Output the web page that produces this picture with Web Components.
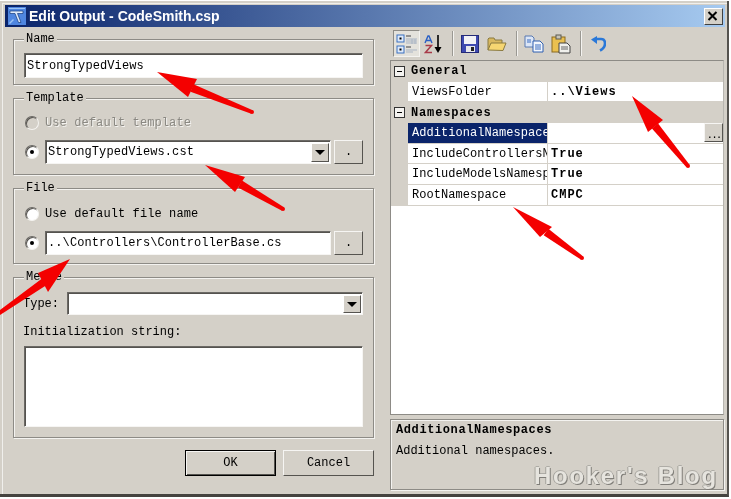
<!DOCTYPE html>
<html>
<head>
<meta charset="utf-8">
<title>Edit Output - CodeSmith.csp</title>
<style>
  html, body { margin: 0; padding: 0; background: #fff; }
  body { font: 12px "Liberation Mono", monospace; color: #000; }
</style>
</head>
<body>
<edit-output-dialog caption="Edit Output - CodeSmith.csp">
  <win-group slot="left" label="Name" style="height:46px">
    <win-edit value="StrongTypedViews" style="margin:13px 0 0 10px;width:339px;height:25px"></win-edit>
  </win-group>
  <win-group slot="left" label="Template" style="height:77px">
    <win-radio label="Use default template" disabled style="margin:17px 0 0 11px"></win-radio>
    <div style="display:flex;margin:10px 0 0 11px;gap:3px;align-items:center">
      <win-radio checked></win-radio>
      <win-edit value="StrongTypedViews.cst" dropdown style="margin-left:3px;width:286px;height:24px"></win-edit>
      <win-button label="." style="width:29px;height:24px"></win-button>
    </div>
  </win-group>
  <win-group slot="left" label="File" style="height:76px">
    <win-radio label="Use default file name" style="margin:18px 0 0 11px"></win-radio>
    <div style="display:flex;margin:10px 0 0 11px;gap:3px;align-items:center">
      <win-radio checked></win-radio>
      <win-edit value="..\Controllers\ControllerBase.cs" style="margin-left:3px;width:286px;height:24px"></win-edit>
      <win-button label="." style="width:29px;height:24px"></win-button>
    </div>
  </win-group>
  <win-group slot="left" label="Merge" style="height:161px">
    <div style="display:flex;align-items:center;margin:14px 0 0 9px">
      <span style="width:44px;white-space:pre">Type:</span>
      <win-edit dropdown style="width:296px;height:23px"></win-edit>
    </div>
    <div style="margin:10px 0 0 9px;height:14px;line-height:14px">Initialization string:</div>
    <win-edit style="margin:7px 0 0 10px;width:339px;height:81px"></win-edit>
  </win-group>
  <div slot="footer" style="display:flex;justify-content:flex-end;gap:7px;margin-top:-1px">
    <win-button label="OK" default style="width:91px;height:26px"></win-button>
    <win-button label="Cancel" style="width:91px;height:26px"></win-button>
  </div>
  <prop-toolbar slot="right"></prop-toolbar>
  <prop-grid slot="right"></prop-grid>
  <prop-help slot="right" heading="AdditionalNamespaces" text="Additional namespaces."></prop-help>
</edit-output-dialog>
<red-arrows></red-arrows>

<script>
// Dialog shell: frame, caption bar and the two columns
class EditOutputDialog extends HTMLElement {
  constructor() {
    super();
    this.attachShadow({ mode: "open" });
  }
  connectedCallback() {
    this.shadowRoot.innerHTML = `
      <style>
        :host {
          display: block; width: 729px; height: 496px; box-sizing: border-box;
          background: #d4d0c8; padding: 4px 2px 0 5px; margin-top: 1px;
          border-bottom: 3px solid #45433f; border-right: 2px solid #55534f; position: relative;
          box-shadow: inset 2px 2px 0 #d4d0c8, inset 3px 3px 0 #f0efec;
          filter: blur(.3px);
        }
        .caption {
          height: 22px; display: flex; align-items: center;
          background: linear-gradient(90deg, #0a246a, #a6caf0);
          color: #fff; font: bold 14px "Liberation Sans", sans-serif;
          padding-left: 3px;
        }
        .caption svg { margin-right: 3px; }
        .close {
          margin-left: auto; margin-right: 2px; width: 19px; height: 17px; box-sizing: border-box;
          background: #d4d0c8; display: flex; align-items: center; justify-content: center;
          border: 1px solid; border-color: #fff #404040 #404040 #fff;
        }
        .body { display: grid; grid-template-columns: 361px 334px; column-gap: 16px; padding-left: 8px; }
        .left { display: flex; flex-direction: column; gap: 13px; padding-top: 12px; }
        .right { display: flex; flex-direction: column; padding-top: 3px; }
        .wm {
          position: absolute; left: 534px; top: 461px; white-space: nowrap;
          font: bold 24px "Liberation Sans", sans-serif; letter-spacing: 1.7px;
          color: #e6e4de; text-shadow: 1px 1px 0 #7f7d78, -1px 0 0 #a5a39d, 0 -1px 0 #aeaca6;
        }
      </style>
      <div class="caption">
        <svg width="18" height="18" viewBox="0 0 18 18">
          <rect width="18" height="18" fill="#4f86e0"/>
          <path d="M1 1h16v1H1zM1 16l4-4 1 1-4 4z" fill="#9cc4f4"/>
          <path d="M2 4h13v2.500H9.500l3.500 9h-2.500L7 6.500H2z" fill="#dfeafa" stroke="#123a7c" stroke-width=".7"/>
        </svg>
        <span>${this.getAttribute("caption")}</span>
        <div class="close">
          <svg width="11" height="10" viewBox="0 0 11 10"><path d="M1.500 1l8 8M9.500 1l-8 8" stroke="#000" stroke-width="2"/></svg>
        </div>
      </div>
      <div class="body">
        <div class="left"><slot name="left"></slot><slot name="footer"></slot></div>
        <div class="right"><slot name="right"></slot></div>
      </div>
      <div class="wm">Hooker's Blog</div>
    `;
  }
}

// Etched group box with its label sitting on the border
class WinGroup extends HTMLElement {
  constructor() {
    super();
    this.attachShadow({ mode: "open" });
  }
  connectedCallback() {
    this.shadowRoot.innerHTML = `
      <style>
        :host {
          display: block; position: relative; box-sizing: border-box;
          border: 1px solid #8d8b86; box-shadow: 1px 1px 0 #f4f3f0, inset 1px 1px 0 #f4f3f0;
        }
        .label {
          position: absolute; left: 10px; top: -8px; padding: 0 2px;
          background: #d4d0c8; line-height: 14px;
        }
      </style>
      <div class="label">${this.getAttribute("label")}</div>
      <slot></slot>
    `;
  }
}

// Sunken text field, optionally with a drop-down arrow
class WinEdit extends HTMLElement {
  constructor() {
    super();
    this.attachShadow({ mode: "open" });
  }
  connectedCallback() {
    const dropdown = this.hasAttribute("dropdown");
    this.shadowRoot.innerHTML = `
      <style>
        :host { display: block; box-sizing: border-box; flex: none; }
        .box {
          height: 100%; box-sizing: border-box; background: #fff;
          border: 1px solid; border-color: #6b6965 #f6f5f3 #f6f5f3 #6b6965;
          box-shadow: inset 1px 1px 0 #55534f;
          display: flex; align-items: center; padding: 0 0 0 1px; white-space: pre; overflow: hidden;
        }
        span { flex: 1; padding-left: 1px; letter-spacing: .1px; }
        .drop {
          width: 18px; height: calc(100% - 3px); margin: 1px 1px 0 0; box-sizing: border-box; flex: none;
          background: #d4d0c8; border: 1px solid; border-color: #fff #55534f #55534f #fff;
          display: flex; align-items: center; justify-content: center;
        }
        .drop i { width: 0; height: 0; border: 5px solid transparent; border-bottom: 0; border-top: 5px solid #000; }
      </style>
      <div class="box">
        <span>${this.getAttribute("value") || ""}</span>
        ${dropdown ? `<div class="drop"><i></i></div>` : ""}
      </div>
    `;
  }
}

// Round option button
class WinRadio extends HTMLElement {
  constructor() {
    super();
    this.attachShadow({ mode: "open" });
  }
  connectedCallback() {
    const disabled = this.hasAttribute("disabled");
    const label = this.getAttribute("label");
    this.shadowRoot.innerHTML = `
      <style>
        :host { display: flex; align-items: center; height: 14px; flex: none; }
        .dot {
          width: 14px; height: 14px; box-sizing: border-box; border-radius: 50%; flex: none;
          border: 1px solid; border-color: #6b6965 #f4f3f0 #f4f3f0 #6b6965;
          background: ${disabled ? "#d4d0c8" : "#fff"};
          box-shadow: inset 1px 1px 0 #55534f;
          display: flex; align-items: center; justify-content: center;
        }
        .dot i { width: 4px; height: 4px; border-radius: 50%; background: #000; }
        .text { margin-left: 6px; white-space: pre; letter-spacing: .1px;
          ${disabled ? "color:#8a8882;text-shadow:1px 1px 0 #f4f3f0;" : ""} }
      </style>
      <div class="dot">${this.hasAttribute("checked") ? "<i></i>" : ""}</div>
      ${label ? `<span class="text">${label}</span>` : ""}
    `;
  }
}

class WinButton extends HTMLElement {
  constructor() {
    super();
    this.attachShadow({ mode: "open" });
  }
  connectedCallback() {
    const isDefault = this.hasAttribute("default");
    this.shadowRoot.innerHTML = `
      <style>
        :host { display: block; flex: none; box-sizing: border-box; }
        .btn {
          height: 100%; box-sizing: border-box; background: #d4d0c8;
          display: flex; align-items: center; justify-content: center;
          border: 1px solid; border-color: ${isDefault ? "#000" : "#f6f5f3 #55534f #55534f #f6f5f3"};
          ${isDefault ? "box-shadow: inset 1px 1px 0 #f6f5f3, inset -1px -1px 0 #55534f;" : ""}
        }
      </style>
      <div class="btn">${this.getAttribute("label")}</div>
    `;
  }
}

// Toolbar above the property grid
class PropToolbar extends HTMLElement {
  constructor() {
    super();
    this.attachShadow({ mode: "open" });
  }
  connectedCallback() {
    this.shadowRoot.innerHTML = `
      <style>
        :host { display: flex; align-items: center; height: 27px; padding-left: 3px; margin-bottom: 3px; }
        .tb { width: 27px; height: 27px; display: flex; align-items: center; justify-content: center; flex: none; box-sizing: border-box; }
        .on { border: 1px solid; border-color: #8d8b86 #f4f3f0 #f4f3f0 #8d8b86; background: #e4e2dc; }
        .sep { width: 2px; height: 25px; margin: 0 2px 0 6px; background: linear-gradient(90deg, #9a9892 50%, #f4f3f0 50%); flex: none; }
      </style>
      <div class="tb on">
        <svg width="22" height="22" viewBox="0 0 22 22">
          <rect x="1" y="2" width="7" height="7" fill="#dfeafa" stroke="#3a70c0"/><rect x="3.500" y="4.500" width="2" height="2" fill="#000"/>
          <rect x="1" y="13" width="7" height="7" fill="#dfeafa" stroke="#3a70c0"/><rect x="3.500" y="15.500" width="2" height="2" fill="#000"/>
          <path d="M10 3h5M10 14h5" stroke="#777" stroke-width="1.500"/>
          <path d="M10 6h11M10 8h11M10 10h11M10 17h11M10 19h7M16 6v5M19 6v5" stroke="#a9b4c4"/>
        </svg>
      </div>
      <div class="tb">
        <svg width="20" height="20" viewBox="0 0 20 20">
          <path d="M1 9l3-7h1l3 7M2.500 6.500h4" fill="none" stroke="#2a5fc4" stroke-width="1.400"/>
          <path d="M1.500 11.500h6l-6 7h6.500" fill="none" stroke="#a83a48" stroke-width="1.500"/>
          <path d="M14 1v15" stroke="#000" stroke-width="1.600"/><path d="M10.500 13h7L14 19z" fill="#000"/>
        </svg>
      </div>
      <div class="sep" style="margin-left:5px"></div>
      <div class="tb">
        <svg width="18" height="18" viewBox="0 0 18 18">
          <rect x=".5" y=".5" width="17" height="17" fill="#3f4ab0" stroke="#242a78"/>
          <rect x="3" y="1" width="12" height="8" fill="#f2f2f6"/>
          <rect x="5" y="11" width="9" height="6" fill="#e8e8ec"/><rect x="10" y="12" width="3" height="4" fill="#222"/>
        </svg>
      </div>
      <div class="tb">
        <svg width="20" height="16" viewBox="0 0 20 16">
          <path d="M1 14V3l1-1h5l1 2h7v3" fill="#d8b860" stroke="#8a7a40"/>
          <path d="M1 14l3-7h15l-3 7.500z" fill="#f6d672" stroke="#8a7a40"/>
        </svg>
      </div>
      <div class="sep"></div>
      <div class="tb">
        <svg width="20" height="18" viewBox="0 0 20 18">
          <path d="M1 1h7l2 2v9H1z" fill="#dce6f6" stroke="#5878b0"/>
          <path d="M9 6h7l3 3v8H9z" fill="#f2f6fc" stroke="#2f5fb0"/>
          <path d="M11 10h6M11 12h6M11 14h6M3 5h4M3 7h4" stroke="#3a6cc0"/>
        </svg>
      </div>
      <div class="tb">
        <svg width="20" height="20" viewBox="0 0 20 20">
          <rect x="1" y="3" width="13" height="15" fill="#eac050" stroke="#8a6a20"/>
          <rect x="5" y="1" width="5" height="4" fill="#c8c4b8" stroke="#5a5a50"/>
          <path d="M8 9h8l3 3v7H8z" fill="#f0f0ec" stroke="#444"/>
          <path d="M10 13h7M10 15h7" stroke="#666"/>
        </svg>
      </div>
      <div class="sep"></div>
      <div class="tb">
        <svg width="16" height="16" viewBox="0 0 16 16">
          <path d="M6 3h5c3 0 4 2 4 4.500 0 3-2 5.500-5 7" fill="none" stroke="#2a78d8" stroke-width="2.600"/>
          <path d="M7 0v8L1 3.500z" fill="#2a78d8"/>
        </svg>
      </div>
    `;
  }
}

// Property grid, rows are built from this.rows
class PropGrid extends HTMLElement {
  constructor() {
    super();
    this.attachShadow({ mode: "open" });
    this.rows = [
      { group: "General" },
      { name: "ViewsFolder", value: "..\\Views" },
      { group: "Namespaces" },
      { name: "AdditionalNamespaces", value: "", selected: true },
      { name: "IncludeControllersNamespace", value: "True" },
      { name: "IncludeModelsNamespace", value: "True" },
      { name: "RootNamespace", value: "CMPC" },
    ];
  }
  connectedCallback() {
    this.shadowRoot.innerHTML = `
      <style>
        :host {
          display: block; height: 355px; box-sizing: border-box; background: #fff;
          border: 1px solid #8d8b86; border-right-color: #b8b6b0; margin-right: 0;
        }
        .cat { height: 20.700px; background: #d4d0c8; display: flex; align-items: center; }
        .cat b { letter-spacing: .85px; margin-left: 6px; }
        .box {
          width: 11px; height: 11px; box-sizing: border-box; border: 1px solid #333; background: #f4f3f0;
          margin-left: 3px; display: flex; align-items: center; justify-content: center;
        }
        .box i { width: 5px; height: 1px; background: #000; }
        .row { height: 20.700px; display: flex; background: #d4d0c8; padding-left: 17px; }
        .name, .val { background: #fff; box-sizing: border-box; border-bottom: 1px solid #d4d0c8; display: flex; align-items: center; overflow: hidden; white-space: pre; }
        .name { width: 139px; padding-left: 4px; letter-spacing: .05px; }
        .val { flex: 1; margin-left: 1px; padding-left: 3px; font-weight: bold; letter-spacing: 1px; position: relative; }
        .sel .name { background: #0a246a; color: #fff; }
        .more {
          position: absolute; right: 0; top: 0; bottom: 1px; width: 19px; box-sizing: border-box;
          background: #d4d0c8; border: 1px solid; border-color: #f6f5f3 #55534f #55534f #f6f5f3;
          font-weight: normal; font-size: 11px; letter-spacing: -2px; text-align: center; line-height: 22px;
        }
      </style>
      ${this.rows
        .map((r) =>
          r.group
            ? `<div class="cat"><div class="box"><i></i></div><b>${r.group}</b></div>`
            : `<div class="row ${r.selected ? "sel" : ""}"><div class="name">${r.name}</div><div class="val">${r.value}${r.selected ? `<div class="more">...</div>` : ""}</div></div>`,
        )
        .join("")}
    `;
  }
}

// Description panel under the grid
class PropHelp extends HTMLElement {
  constructor() {
    super();
    this.attachShadow({ mode: "open" });
  }
  connectedCallback() {
    this.shadowRoot.innerHTML = `
      <style>
        :host {
          display: block; height: 71px; box-sizing: border-box; margin-top: 4px;
          border: 1px solid #8d8b86; box-shadow: inset 1px 1px 0 #f4f3f0, 1px 1px 0 #f4f3f0; padding: 3px 5px;
        }
        b { display: block; line-height: 14px; letter-spacing: .6px; margin-bottom: 7px; }
        div { line-height: 14px; }
      </style>
      <b>${this.getAttribute("heading")}</b>
      <div>${this.getAttribute("text")}</div>
    `;
  }
}

// Red annotation arrows drawn over the screenshot
class RedArrows extends HTMLElement {
  constructor() {
    super();
    this.attachShadow({ mode: "open" });
    this.arrows = [
      { tail: [252, 112], neck: [192, 88], head: "157,72 197,79 188,97" },
      { tail: [283, 209], neck: [240, 184], head: "205,165 245,177 235,192" },
      { tail: [-2, 314], neck: [44, 282], head: "70,259 38,273 48,292" },
      { tail: [688, 166], neck: [655, 126], head: "632,96 663,120 648,132" },
      { tail: [582, 258], neck: [546, 232], head: "513,207 552,227 540,237" },
    ];
  }
  // Shaft gets wider towards the head, like a marker stroke
  shaft(a) {
    const dx = a.neck[0] - a.tail[0];
    const dy = a.neck[1] - a.tail[1];
    const len = Math.hypot(dx, dy);
    const nx = -dy / len;
    const ny = dx / len;
    const pt = (p, w) => `${p[0] + nx * w},${p[1] + ny * w} `;
    return pt(a.tail, 2) + pt(a.neck, 4) + pt(a.neck, -4) + pt(a.tail, -2);
  }
  connectedCallback() {
    this.shadowRoot.innerHTML = `
      <style>:host { position: absolute; left: 0; top: 0; width: 731px; height: 499px; pointer-events: none; }</style>
      <svg width="731" height="499" viewBox="0 0 731 499">
        ${this.arrows
          .map(
            (a) => `<polygon points="${this.shaft(a)}" fill="#f40000"/>
                    <circle cx="${a.tail[0]}" cy="${a.tail[1]}" r="2" fill="#f40000"/>
                    <polygon points="${a.head}" fill="#f40000"/>`,
          )
          .join("")}
      </svg>
    `;
  }
}

customElements.define("edit-output-dialog", EditOutputDialog);
customElements.define("win-group", WinGroup);
customElements.define("win-edit", WinEdit);
customElements.define("win-radio", WinRadio);
customElements.define("win-button", WinButton);
customElements.define("prop-toolbar", PropToolbar);
customElements.define("prop-grid", PropGrid);
customElements.define("prop-help", PropHelp);
customElements.define("red-arrows", RedArrows);
</script>
</body>
</html>
